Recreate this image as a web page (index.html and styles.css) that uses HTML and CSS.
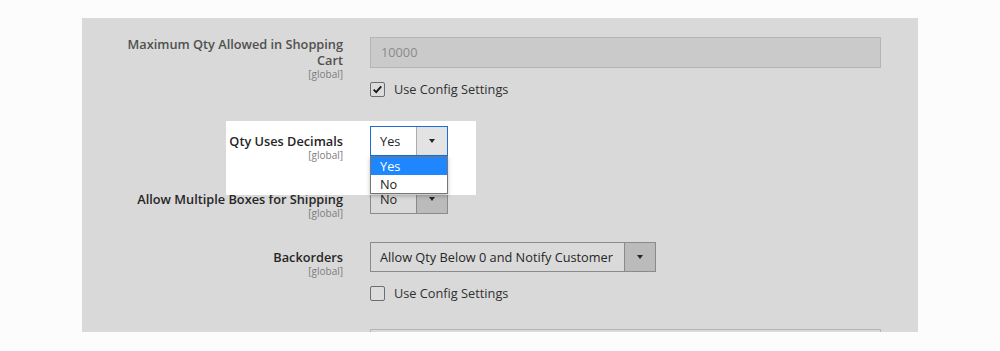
FILE: index.html
```html
<!DOCTYPE html>
<html>
<head>
<meta charset="utf-8">
<link rel="stylesheet" href="styles.css">
</head>
<body>
<div class="panel">
  <div class="field first">
    <div class="label muted">Maximum Qty Allowed in Shopping Cart<span class="scope">[global]</span></div>
    <div class="control">
      <div class="input disabled">10000</div>
      <div class="check"><span class="box"><svg width="13" height="13" viewBox="0 0 13 13"><polyline points="2.6,6.6 5.2,9.2 10.2,3.4" fill="none" stroke="#1a1a1a" stroke-width="1.9"/></svg></span>Use Config Settings</div>
    </div>
  </div>

  <div class="field spot">
    <div class="spotlight"></div>
    <div class="label sel-label">Qty Uses Decimals<span class="scope">[global]</span></div>
    <div class="control">
      <div class="select focus small">
        <span class="val">Yes</span>
        <span class="arrow"><span class="tri"></span></span>
        <div class="options">
          <div class="opt active">Yes</div>
          <div class="opt">No</div>
        </div>
      </div>
    </div>
  </div>

  <div class="field">
    <div class="label sel-label">Allow Multiple Boxes for Shipping<span class="scope">[global]</span></div>
    <div class="control">
      <div class="select small dim">
        <span class="val">No</span>
        <span class="arrow"><span class="tri"></span></span>
      </div>
    </div>
  </div>

  <div class="field">
    <div class="label sel-label">Backorders<span class="scope">[global]</span></div>
    <div class="control">
      <div class="select wide dim">
        <span class="val">Allow Qty Below 0 and Notify Customer</span>
        <span class="arrow"><span class="tri"></span></span>
      </div>
      <div class="check"><span class="box"></span>Use Config Settings</div>
    </div>
  </div>

  <div class="field">
    <div class="label sel-label"></div>
    <div class="control">
      <div class="input"></div>
    </div>
  </div>
</div>
</body>
</html>
```

FILE: styles.css
```css
* { box-sizing: border-box; }
html, body { margin: 0; padding: 0; }
body {
  background: #fdfcfd;
  font-family: "Open Sans", "DejaVu Sans", sans-serif;
  color: #303030;
  font-size: 12.75px;
}
.panel {
  margin: 18px 0 0 82px;
  width: 836px;
  height: 314px;
  background: #d9d9d9;
  padding: 19px 37px 0 28px;
  overflow: hidden;
  position: relative;
}
.field {
  display: grid;
  grid-template-columns: 233px 1fr;
  column-gap: 27px;
  align-items: start;
  margin-bottom: 28px;
  position: relative;
}
.field.first { margin-bottom: 29px; }
.label {
  text-align: right;
  font-weight: 600;
  font-size: 12.75px;
  line-height: 16px;
  color: #262626;
  position: relative;
  z-index: 2;
  margin-bottom: -20px;
}
.label.muted { color: #505050; margin-top: -1px; }
.label.sel-label { padding-top: 7px; }
.scope {
  display: block;
  font-size: 10px;
  line-height: 12px;
  font-weight: 400;
  color: #7d7d7d;
  margin-top: 0;
}
.control { position: relative; z-index: 2; }
.input {
  height: 31px;
  border: 1px solid #b5b5b5;
  background: #dadada;
  padding: 5px 10px;
  font-size: 12.75px;
  line-height: 19px;
}
.input.disabled { background: #cacaca; color: #8a8a8a; }
.check {
  display: flex;
  align-items: center;
  margin-top: 14px;
  height: 15px;
  font-size: 12.75px;
  line-height: 15px;
  color: #303030;
}
.box {
  width: 15px;
  height: 15px;
  border: 1px solid #6e6e6e;
  border-radius: 2px;
  margin-right: 9px;
  display: flex;
  align-items: center;
  justify-content: center;
  background: #dcdcdc;
}
.box svg { display: block; }
.select {
  display: flex;
  height: 30px;
  border: 1px solid #8a8a8a;
  background: #dadada;
  position: relative;
}
.select.small { width: 78px; }
.select.wide { width: 286px; }
.select .val {
  flex: 1;
  padding: 0 9px;
  line-height: 28px;
  white-space: nowrap;
  overflow: hidden;
  color: #262626;
}
.select .arrow {
  flex: 0 0 31px;
  border-left: 1px solid #8a8a8a;
  background: #bbbbbb;
  display: flex;
  align-items: center;
  justify-content: center;
}
.select.focus { border-color: #1b6fd6; background: #fff; }
.select.focus .arrow { background: #e3e3e3; border-left-color: #adadad; }
.tri {
  width: 0;
  height: 0;
  border-left: 3.5px solid transparent;
  border-right: 3.5px solid transparent;
  border-top: 4px solid #262626;
}
.options {
  position: absolute;
  top: 29px;
  left: -1px;
  width: 78px;
  background: #fff;
  border: 1px solid #767676;
  box-shadow: 0 2px 4px rgba(0,0,0,0.25);
  z-index: 5;
}
.opt {
  height: 18px;
  line-height: 18px;
  padding: 0 9px;
  font-size: 12.75px;
  color: #1a1a1a;
}
.opt.active { background: #1e87ff; color: #fff; }
.spot { z-index: 3; }
.spotlight {
  position: absolute;
  left: 116px;
  top: -5px;
  width: 250px;
  height: 74px;
  background: #ffffff;
  z-index: 1;
}
```
